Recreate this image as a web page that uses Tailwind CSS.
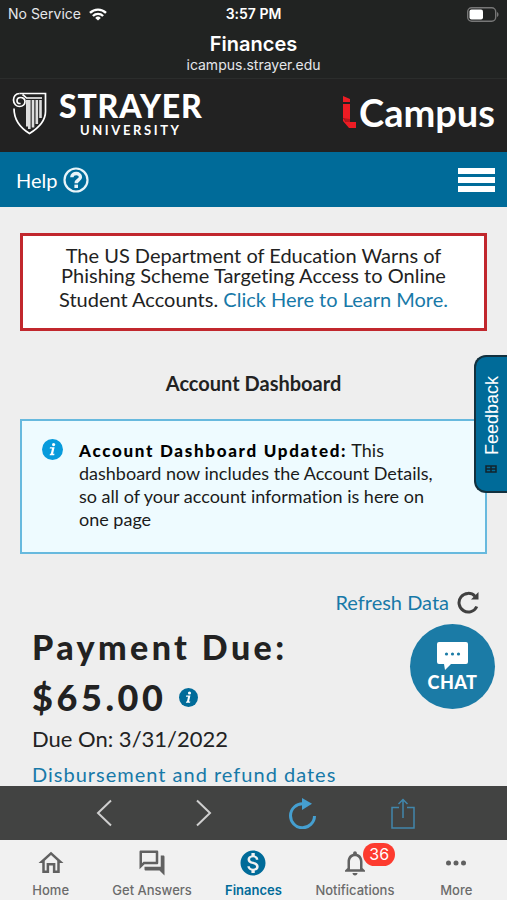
<!DOCTYPE html>
<html lang="en">

<head>
  <meta charset="UTF-8">
  <meta name="viewport" content="width=device-width, initial-scale=1.0">
  <title>Finances</title>
  <script src="https://cdn.jsdelivr.net/npm/@tailwindcss/browser@4"></script>
</head>

<body class="bg-[#eeeeee] font-['Lato',sans-serif] text-[#222222] [font-variant-ligatures:none]">
  <div class="flex flex-col h-screen overflow-hidden">
    <!-- Status bar and page title -->
    <div class="bg-[#212322] text-white font-['Inter',sans-serif] border-b border-[#2b2d2c] pb-1">
      <div class="grid grid-cols-3 items-center h-7 px-2">
        <div class="flex items-center gap-2 text-sm text-gray-200">
          <span>No Service</span>
          <svg class="w-[18px] h-[13px]" viewBox="0 0 18 13" fill="none" stroke="#fff" stroke-width="2.4">
            <path d="M1 4.9a11.4 11.4 0 0 1 16 0M3.900 8a7.300 7.300 0 0 1 10.200 0" />
            <path d="M9 12.600 6.200 9.900a4 4 0 0 1 5.600 0z" fill="#fff" stroke="none" />
          </svg>
        </div>
        <div class="text-center text-sm font-semibold">3:57 PM</div>
        <svg class="justify-self-end w-8 h-[15px]" viewBox="0 0 32 15">
          <rect x="0.7" y="0.7" width="28" height="13.6" rx="4" fill="none" stroke="#777" stroke-width="1.4" />
          <rect x="2.5" y="2.5" width="13.5" height="10" rx="2" fill="#fff" />
          <path d="M30 5c2 .8 2 4.200 0 5z" fill="#777" />
        </svg>
      </div>
      <div class="flex flex-col items-center pt-1">
        <h1 class="text-xl leading-6 font-semibold">Finances</h1>
        <p class="text-sm leading-[18px] text-gray-200">icampus.strayer.edu</p>
      </div>
    </div>

    <!-- Brand header -->
    <header class="flex justify-between items-center h-[73px] bg-[#222222] text-white px-3">
      <a href="#" class="flex items-center gap-3 pb-1">
        <svg class="w-[35px] h-[43px]" viewBox="0 0 34 43" fill="none" stroke="#fff" stroke-width="1.700">
          <path d="M7 1.500h26v18c0 10-7 16.500-16 22C8 36 1.500 29 1.500 16.500" />
          <path d="M7 1.500C3 1.500 1 4.500 1 8c0 4 3 6.500 6 6.500 3.500 0 5.500-2.500 5.500-5S10.500 5.500 8 5.500 4.500 7 4.500 9s2 3 3.500 2.200" />
          <path d="M10 2.500c2 1.500 3 2.500 4 3.500h15.500M14.500 8v26.500" />
          <path d="M16.800 8v29M20.500 8v27.500M24.300 8v24M28 8v18" stroke-width="2.600" stroke="#ddd" />
        </svg>
        <span class="flex flex-col items-center">
          <span class="text-[32px] leading-8 font-black tracking-wide">STRAYER</span>
          <span class="text-[13px] leading-4 font-bold tracking-[0.2em]">UNIVERSITY</span>
        </span>
      </a>
      <a href="#" class="flex items-center gap-[2px] pb-2">
        <svg class="w-[14px] h-8" viewBox="0 0 14 32">
          <path d="M0 0 7 3v3H0zM0 8h7v17l-7-3z" fill="#ed1c24" />
          <path d="M0 22 3 26h10v6H6l-6-7z" fill="#ed1c24" />
          <path d="m0 22 7 1v3H3z" fill="#b9151b" />
        </svg>
        <span class="text-[38px] leading-10 font-bold">Campus</span>
      </a>
    </header>

    <nav class="flex justify-between items-center h-[55px] bg-[#006b99] text-white px-3">
      <a href="#" class="flex items-center gap-[6px] text-xl pl-1">
        Help
        <svg class="w-[26px] h-[26px]" viewBox="0 0 26 26" fill="none" stroke="#e8f4f9">
          <circle cx="13" cy="13" r="11.500" stroke-width="2.200" />
          <path d="M8.800 10.200c.2-5 8.800-4.800 8.600 0 0 3-4.200 2.600-4.200 6" stroke-width="3.400" />
          <path d="M11.400 17.600h3.600v3.400h-3.600z" fill="#e8f4f9" stroke="none" />
        </svg>
      </a>
      <button aria-label="Menu" class="flex flex-col gap-[3px] w-[37px]">
        <span class="w-full h-[6px] bg-white"></span>
        <span class="w-full h-[6px] bg-white"></span>
        <span class="w-full h-[6px] bg-white"></span>
      </button>
    </nav>

    <main class="relative flex-1 min-h-0 overflow-hidden px-5 pt-[26px]">
      <section class="h-[98px] border-3 border-[#c1272d] bg-white text-center text-xl leading-5 px-4 pt-[9px]">
        <p>The US Department of Education Warns of<br>Phishing Scheme Targeting Access to Online<br>Student Accounts. <a href="#" class="leading-7 text-[#1779a8]">Click Here to Learn More.</a></p>
      </section>

      <h2 class="mt-10 text-center text-xl leading-6 font-bold">Account Dashboard</h2>

      <section class="flex gap-4 mt-6 h-[135px] border-2 border-[#67b9de] bg-[#eefbff] text-lg leading-[23px] text-[#1b1b1b] pl-5 pr-8 pt-[18px]">
        <svg class="shrink-0 w-[21px] h-[21px]" viewBox="0 0 21 21">
          <circle cx="10.500" cy="10.500" r="10.500" fill="#089bdc" />
          <circle cx="11.600" cy="5.600" r="1.600" fill="#fff" />
          <path d="M8 8.200h4.600l-1.500 6.600h1.400l-.3 1.400H7.600l.4-1.400h.8l1.200-5.200H7.700z" fill="#fff" />
        </svg>
        <p><strong class="text-[17px] font-black tracking-widest text-black">Account Dashboard Updated:</strong> This<br>dashboard now includes the Account Details,<br>so all of your account information is here on<br>one page</p>
      </section>

      <div class="flex justify-end mt-9 pr-2">
        <button class="flex items-center gap-2 text-xl leading-6 text-[#1779a8]">
          Refresh Data
          <svg class="w-[22px] h-[23px]" viewBox="0 0 22 23" fill="none" stroke="#404040" stroke-width="3">
            <path d="M19.800 15.500A9.300 9.300 0 1 1 18 5.200" />
            <path d="M21.500 1v7.500h-7.500z" fill="#404040" stroke="none" />
          </svg>
        </button>
      </div>

      <section class="pl-3 mt-2">
        <h3 class="text-[34px] leading-[50px] font-black tracking-widest">Payment Due:</h3>
        <div class="flex items-center gap-3 text-4xl leading-[50px] font-black tracking-widest">
          $65.00
          <button aria-label="Payment details">
            <svg class="w-[19px] h-[19px]" viewBox="0 0 21 21">
              <circle cx="10.500" cy="10.500" r="10.500" fill="#006b99" />
              <circle cx="11.600" cy="5.600" r="1.700" fill="#fff" />
              <path d="M8 8.200h4.600l-1.500 6.600h1.400l-.3 1.400H7.600l.4-1.400h.8l1.200-5.200H7.700z" fill="#fff" />
            </svg>
          </button>
        </div>
        <p class="text-[22px] leading-[34px]">Due On: 3/31/2022</p>
        <a href="#" class="block text-xl leading-9 tracking-wider text-[#1779a8]">Disbursement and refund dates</a>
      </section>

      <button class="absolute right-0 top-[148px] flex items-center justify-center gap-[10px] w-[33px] h-[138px] rounded-r-xl border-2 border-l-0 border-[#12303e] bg-[#006b99] text-white font-['Liberation_Sans',sans-serif] text-lg leading-5 [writing-mode:vertical-rl] rotate-180">
        <svg class="w-3 h-2" viewBox="0 0 12 8" fill="none" stroke="#12242d" stroke-width="1.500">
          <path d="M1 1h10v6H1zM1 4h10M6 1v6" />
        </svg>
        Feedback
      </button>

      <button class="absolute right-3 top-[417px] flex flex-col items-center w-[85px] h-[85px] rounded-full bg-[#1b7ba6] text-white pt-[18px]">
        <svg class="w-[31px] h-7" viewBox="0 0 31 28">
          <path d="M2 0h27q2 0 2 2v18q0 2-2 2H14l-6 6-1-6H2q-2 0-2-2V2q0-2 2-2z" fill="#fff" />
          <g fill="#1b7ba6">
            <circle cx="9.500" cy="12" r="1.600" />
            <circle cx="15.500" cy="12" r="1.600" />
            <circle cx="21.500" cy="12" r="1.600" />
          </g>
        </svg>
        <span class="text-lg leading-6 font-black tracking-wide">CHAT</span>
      </button>
    </main>

    <!-- Browser controls -->
    <div class="grid grid-cols-4 items-center justify-items-center h-[54px] bg-[#424342] px-[54px]">
      <button aria-label="Back">
        <svg class="w-4 h-7" viewBox="0 0 16 28" fill="none" stroke="#cfcfcf" stroke-width="2">
          <path d="M15 1.500 2 14l13 12.500" />
        </svg>
      </button>
      <button aria-label="Forward">
        <svg class="w-4 h-7" viewBox="0 0 16 28" fill="none" stroke="#cfcfcf" stroke-width="2">
          <path d="m1 1.500 13 12.500L1 26.500" />
        </svg>
      </button>
      <button aria-label="Reload">
        <svg class="w-7 h-[31px]" viewBox="0 0 28 31" fill="none" stroke="#459fd0" stroke-width="3">
          <path d="M25.500 18A12 12 0 1 1 14 5.800" />
          <path d="m13 0 10 5.800L13 12z" fill="#459fd0" stroke="none" />
        </svg>
      </button>
      <button aria-label="Share">
        <svg class="w-6 h-[31px]" viewBox="0 0 24 31" fill="none" stroke="#4187ac" stroke-width="1.500">
          <path d="M8 9.500H1V30h22V9.500h-7M12 20V1.500M7.500 6 12 1.500 16.500 6" />
        </svg>
      </button>
    </div>

    <!-- Tab bar -->
    <nav class="grid grid-cols-5 h-[60px] bg-[#f1f1f1] text-[#6b6b6b] font-['Inter',sans-serif] text-[13px] leading-4 font-medium pt-2">
      <a href="#" class="flex flex-col items-center gap-1">
        <svg class="w-[30px] h-[30px]" viewBox="0 0 24 24" fill="#616161">
          <path d="M12 5.690l5 4.500V18h-1.500v-6h-7v6H7v-7.810l5-4.500M12 3L2 12h3v8h5.500v-6h3v6H19v-8h3L12 3z" />
        </svg>
        Home
      </a>
      <a href="#" class="flex flex-col items-center gap-1">
        <svg class="w-[30px] h-[30px]" viewBox="0 0 24 24" fill="#616161">
          <path d="M15 4v7H5.170L4 12.170V4h11m1-2H3c-.55 0-1 .45-1 1v14l4-4h10c.55 0 1-.45 1-1V3c0-.55-.45-1-1-1zm5 4h-2v9H6v2c0 .55.45 1 1 1h11l4 4V7c0-.55-.45-1-1-1z" />
        </svg>
        Get Answers
      </a>
      <a href="#" class="flex flex-col items-center gap-1 font-semibold text-[#006b99]">
        <svg class="w-[30px] h-[30px]" viewBox="0 0 24 24" fill="#006b99">
          <path d="M12 2C6.480 2 2 6.480 2 12s4.480 10 10 10 10-4.480 10-10S17.520 2 12 2zm1.410 16.090V20h-2.670v-1.930c-1.710-.36-3.160-1.460-3.270-3.400h1.960c.1 1.050.82 1.870 2.650 1.870 1.960 0 2.400-.98 2.400-1.590 0-.83-.44-1.610-2.670-2.140-2.480-.6-4.180-1.620-4.180-3.670 0-1.720 1.390-2.840 3.110-3.210V4h2.670v1.950c1.860.45 2.790 1.860 2.850 3.390H14.300c-.05-1.110-.64-1.870-2.220-1.870-1.500 0-2.400.68-2.400 1.640 0 .84.65 1.390 2.670 1.910s4.180 1.390 4.180 3.910c-.01 1.830-1.380 2.830-3.120 3.160z" />
        </svg>
        Finances
      </a>
      <a href="#" class="relative flex flex-col items-center gap-1">
        <svg class="w-[30px] h-[30px]" viewBox="0 0 24 24" fill="#616161">
          <path d="M12 22c1.100 0 2-.9 2-2h-4c0 1.100.9 2 2 2zm6-6v-5c0-3.070-1.630-5.640-4.500-6.320V4c0-.83-.67-1.500-1.500-1.500s-1.500.67-1.500 1.500v.68C7.640 5.360 6 7.920 6 11v5l-2 2v1h16v-1l-2-2zm-2 1H8v-6c0-2.480 1.510-4.500 4-4.500s4 2.020 4 4.500v6z" />
        </svg>
        Notifications
        <span class="absolute left-[59px] -top-[5px] w-8 h-[23px] rounded-full bg-[#fd3b2f] text-white text-center text-base leading-[23px] font-normal">36</span>
      </a>
      <a href="#" class="flex flex-col items-center gap-1">
        <svg class="w-[30px] h-[30px]" viewBox="0 0 24 24" fill="#616161">
          <circle cx="6" cy="12" r="2" />
          <circle cx="12" cy="12" r="2" />
          <circle cx="18" cy="12" r="2" />
        </svg>
        More
      </a>
    </nav>
  </div>
</body>

</html>
